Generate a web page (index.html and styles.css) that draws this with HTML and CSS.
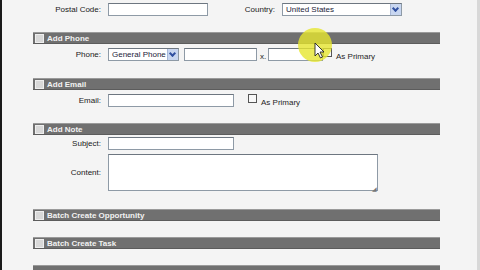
FILE: index.html
```html
<html>

<head>
  <title>Contact</title>
  <link rel="stylesheet" href="styles.css">
</head>

<body>
  <div class="frame">
    <div class="form">
      <div class="row row-postal">
        <label class="lbl">Postal Code:</label>
        <div class="fields">
          <span class="input w-postal"></span>
          <label class="lbl lbl-country">Country:</label>
          <span class="select w-country">United States<span class="arrow"></span></span>
        </div>
      </div>

      <div class="bar bar-phone"><span class="box"></span>Add Phone</div>
      <div class="row row-phone">
        <label class="lbl">Phone:</label>
        <div class="fields">
          <span class="select w-type">General Phone<span class="arrow"></span></span>
          <span class="input w-phone"></span>
          <span class="ext">x.</span>
          <span class="input w-ext"></span>
          <span class="box box-field"></span>
          <span class="hint">As Primary</span>
        </div>
      </div>

      <div class="bar bar-email"><span class="box"></span>Add Email</div>
      <div class="row row-email">
        <label class="lbl">Email:</label>
        <div class="fields">
          <span class="input w-email"></span>
          <span class="box box-field box-email"></span>
          <span class="hint">As Primary</span>
        </div>
      </div>

      <div class="bar bar-note"><span class="box"></span>Add Note</div>
      <div class="row row-subject">
        <label class="lbl">Subject:</label>
        <div class="fields">
          <span class="input w-email"></span>
        </div>
      </div>
      <div class="row row-content">
        <label class="lbl">Content:</label>
        <div class="fields">
          <span class="textarea"><span class="grip">&#x25E2;</span></span>
        </div>
      </div>

      <div class="bar bar-opp"><span class="box"></span>Batch Create Opportunity</div>
      <div class="bar bar-task"><span class="box"></span>Batch Create Task</div>
      <div class="bar bar-last"></div>
    </div>

    <!-- cursor highlight from the screen recording -->
    <svg class="pointer" width="40" height="40" viewBox="0 0 40 40">
      <circle cx="18" cy="18" r="17" fill="#e6e630" fill-opacity="0.8" />
      <path d="M18 16 L18 29 L21 26 L23.5 31 L25.5 30 L23 25 L27 25 Z" fill="#fff" stroke="#222" stroke-width="0.9" />
    </svg>
  </div>
</body>

</html>
```

FILE: styles.css
```css
body {
  margin: 0;
  background-color: #f4f4f4;
  font-family: "Liberation Sans", Arial, sans-serif;
  font-size: 8px;
  color: #1e1e1e;
}

.frame {
  position: relative;
  width: 480px;
  height: 270px;
  overflow: hidden;
  box-sizing: border-box;
  border-left: 2px solid #1a1a1a;
  border-right: 3px solid #d8d8d8;
}

.form {
  display: flex;
  flex-direction: column;
  padding: 3px 0 0 31px;
  width: 407px;
}

.row {
  display: grid;
  grid-template-columns: 68px 1fr;
  column-gap: 7px;
  align-items: center;
}

.lbl {
  text-align: right;
  color: #1a1a1a;
}

.fields {
  display: flex;
  align-items: center;
}

.input,
.select,
.textarea {
  display: block;
  box-sizing: border-box;
  background-color: #fff;
  border: 1px solid #8e9aa6;
  border-top-color: #6d7680;
}

.input {
  height: 13px;
}

.select {
  position: relative;
  height: 13px;
  line-height: 11px;
  padding-left: 3px;
  color: #1c1c3a;
  white-space: nowrap;
  overflow: hidden;
}

.arrow {
  position: absolute;
  right: 0;
  top: 0;
  width: 10px;
  height: 11px;
  background-color: #c8d6f0;
  border-left: 1px solid #a8b8d8;
}

.arrow::after {
  content: "";
  position: absolute;
  left: 2px;
  top: 2px;
  width: 3px;
  height: 3px;
  border-right: 2px solid #3050a0;
  border-bottom: 2px solid #3050a0;
  transform: rotate(45deg);
}

.w-postal { width: 100px; }
.w-country { width: 120px; }
.w-type { width: 71px; }
.w-phone { width: 73px; margin-left: 5px; }
.w-ext { width: 55px; }
.w-email { width: 126px; }

.lbl-country {
  width: 67px;
  margin-right: 7px;
}

.ext {
  width: 11px;
  padding-left: 3px;
  padding-top: 4px;
  box-sizing: border-box;
}

.box {
  display: inline-block;
  box-sizing: border-box;
  width: 9px;
  height: 9px;
  background-color: #f8f8f8;
  border: 1px solid #555;
}

.box-field {
  margin-right: 4px;
  align-self: flex-start;
  margin-top: 1px;
}

.box-email {
  margin-left: 14px;
}

.hint {
  color: #1e1e1e;
  padding-top: 5px;
}

.textarea {
  position: relative;
  width: 270px;
  height: 37px;
}

.grip {
  position: absolute;
  right: 0;
  bottom: -2px;
  font-size: 6px;
  color: #777;
}

.bar {
  display: flex;
  align-items: center;
  height: 12px;
  box-sizing: border-box;
  background-color: #707070;
  border-top: 1px solid #9a9a9a;
  border-bottom: 1px solid #5c5c5c;
  color: #f2f2f2;
  font-weight: bold;
  padding-left: 2px;
}

.bar .box {
  margin-right: 3px;
  border-color: #eee;
  background-color: #d8d8d8;
}

.row-postal { height: 13px; }
.bar-phone { margin-top: 16px; }
.row-phone { margin-top: 3px; height: 13px; }
.bar-email { margin-top: 18px; }
.row-email { margin-top: 3px; height: 13px; }
.bar-note { margin-top: 17px; }
.row-subject { margin-top: 2px; height: 13px; }
.row-content { margin-top: 4px; }
.bar-opp { margin-top: 18px; }
.bar-task { margin-top: 16px; }
.bar-last { margin-top: 16px; }

.pointer {
  position: absolute;
  left: 295px;
  top: 27px;
}
```
